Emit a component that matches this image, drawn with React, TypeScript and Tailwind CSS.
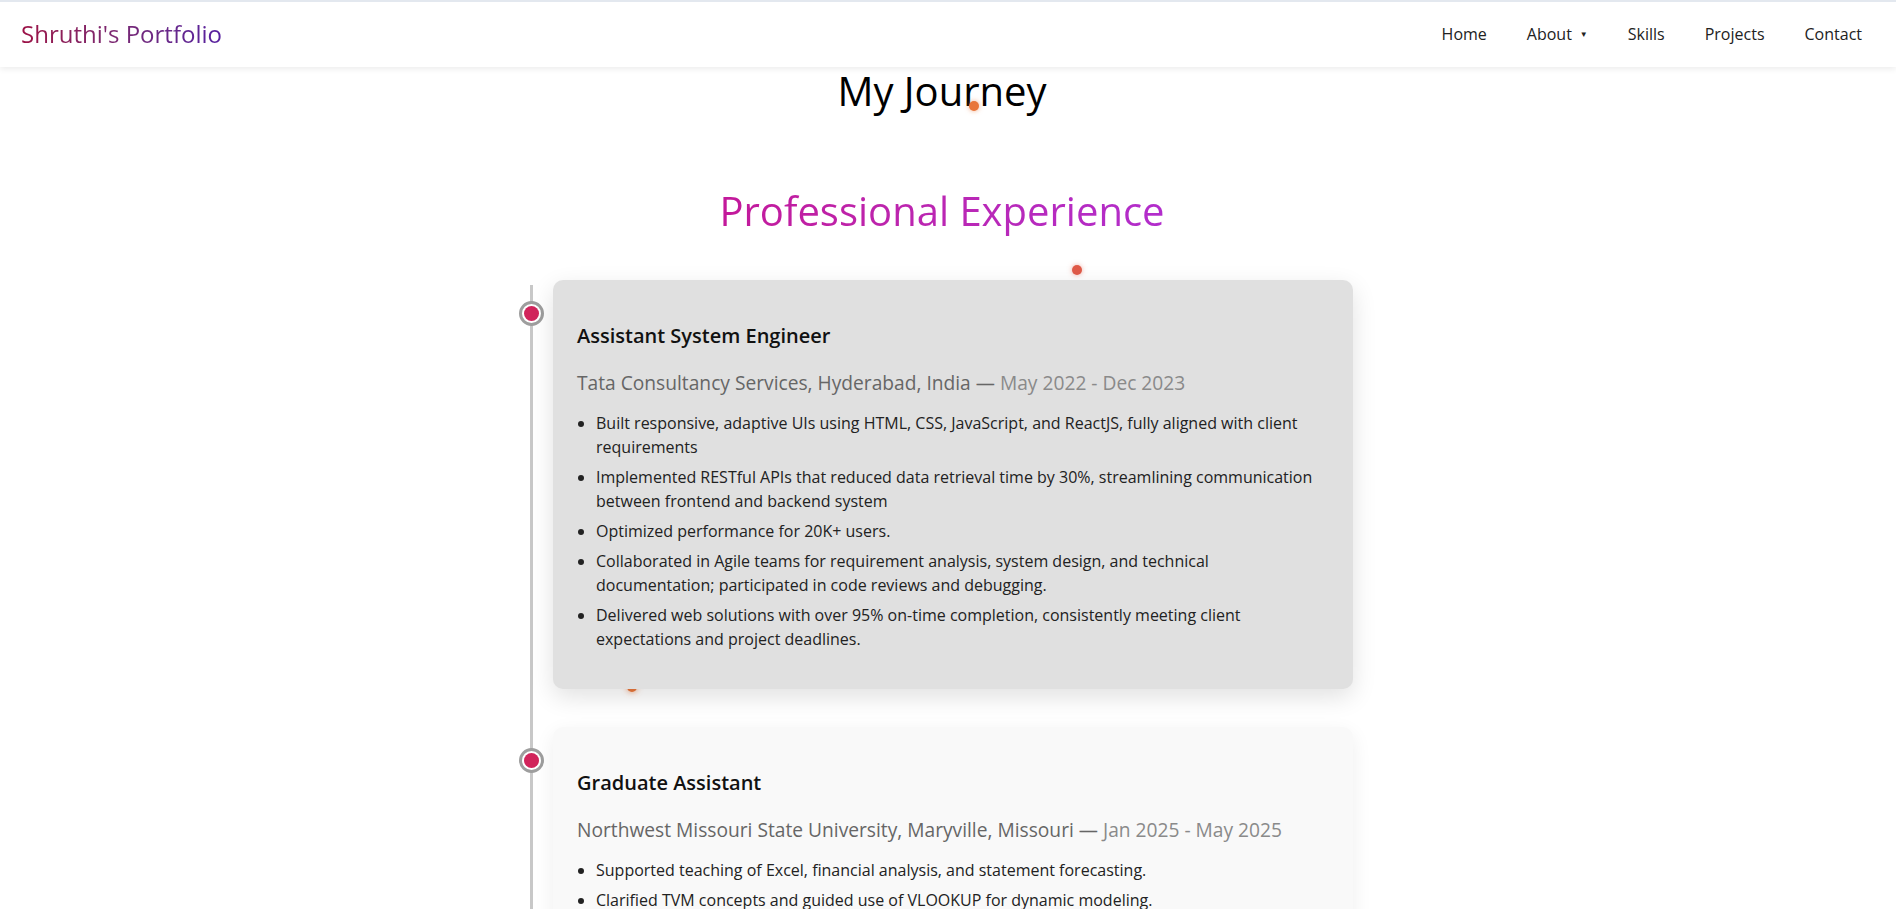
import React from "react";

type Job = {
  title: string;
  company: string;
  dates: string;
  points: string[];
  active?: boolean;
};

const jobs: Job[] = [
  {
    title: "Assistant System Engineer",
    company: "Tata Consultancy Services, Hyderabad, India",
    dates: "May 2022 - Dec 2023",
    active: true,
    points: [
      "Built responsive, adaptive UIs using HTML, CSS, JavaScript, and ReactJS, fully aligned with client requirements",
      "Implemented RESTful APIs that reduced data retrieval time by 30%, streamlining communication between frontend and backend system",
      "Optimized performance for 20K+ users.",
      "Collaborated in Agile teams for requirement analysis, system design, and technical documentation; participated in code reviews and debugging.",
      "Delivered web solutions with over 95% on-time completion, consistently meeting client expectations and project deadlines.",
    ],
  },
  {
    title: "Graduate Assistant",
    company: "Northwest Missouri State University, Maryville, Missouri",
    dates: "Jan 2025 - May 2025",
    points: [
      "Supported teaching of Excel, financial analysis, and statement forecasting.",
      "Clarified TVM concepts and guided use of VLOOKUP for dynamic modeling.",
    ],
  },
];

function Marker() {
  return (
    <div className="absolute left-0 top-[21px] w-[25px] h-[25px] rounded-full border-[3px] border-[#9e9e9e] bg-white flex items-center justify-center">
      <div className="w-[15px] h-[15px] rounded-full bg-[#d1245b]" />
    </div>
  );
}

function Card({ job }: { job: Job }) {
  return (
    <div className="flex">
      <div className="w-[34px] shrink-0 relative">
        <Marker />
      </div>
      <div
        className={
          job.active
            ? "relative z-10 w-[800px] rounded-[10px] bg-[#e0e0e0] pl-[24px] pr-[32px] pt-[41px] pb-[32px] shadow-[0_8px_24px_rgba(0,0,0,0.12)]"
            : "relative z-10 w-[800px] rounded-[10px] bg-[#f9f9f9] pl-[24px] pr-[32px] pt-[41px] pb-[32px] shadow-[0_6px_20px_rgba(0,0,0,0.07)]"
        }
      >
        <h3 className="text-[20px] leading-[30px] font-semibold text-[#111]">{job.title}</h3>
        <p className="mt-[17.6px] text-[19.2px] leading-[28.8px] text-[#666]">
          {job.company} — <span className="text-[#8a8a8a]">{job.dates}</span>
        </p>
        <ul className="mt-[13.6px] pl-[19px] list-disc text-[16px] leading-[24px] text-[#222]">
          {job.points.map((p) => (
            <li key={p} className="mb-[6px]">
              {p}
            </li>
          ))}
        </ul>
      </div>
    </div>
  );
}

export default function App() {
  return (
    <div className="min-h-screen bg-white font-['Open_Sans',sans-serif] relative overflow-hidden">
      <nav className="relative z-20 h-[67px] border-t-2 border-[#e3e8ef] bg-white shadow-[0_2px_6px_rgba(0,0,0,0.08)] flex items-center justify-between pl-[21px] pr-[34px] pb-[2px]">
        <div className="text-[24px] leading-[32px] font-medium bg-linear-to-r from-[#9c0f45] to-[#561fa0] bg-clip-text text-transparent">
          Shruthi's Portfolio
        </div>
        <ul className="flex items-center gap-[40px] text-[16px] text-[#222]">
          <li>Home</li>
          <li className="flex items-center">
            About<span className="ml-[8px] text-[8px]">▼</span>
          </li>
          <li>Skills</li>
          <li>Projects</li>
          <li>Contact</li>
        </ul>
      </nav>

      <main className="relative">
        <div className="absolute left-[969px] top-[34px] w-[10px] h-[10px] rounded-full bg-[#e8763a] shadow-[0_0_5px_rgba(232,118,58,0.6)] z-10" />
        <div className="absolute left-[1072px] top-[198px] w-[10px] h-[10px] rounded-full bg-[#e05a48] shadow-[0_0_5px_rgba(224,90,72,0.5)]" />
        <div className="absolute left-[627px] top-[615px] w-[10px] h-[10px] rounded-full bg-[#e8763a] shadow-[0_0_6px_rgba(232,118,58,0.7)]" />

        <div className="pr-[12px]">
          <h1 className="text-center text-[40px] leading-[48px] font-medium text-black">My Journey</h1>
          <h2 className="mt-[72px] text-center text-[40px] leading-[48px] font-medium">
            <span className="bg-linear-to-r from-[#c3189a] to-[#b22dcc] bg-clip-text text-transparent">
              Professional Experience
            </span>
          </h2>
        </div>

        <div className="relative mt-[45px] w-[858px] mx-auto pb-[40px]">
          <div className="absolute left-[11px] top-[5px] bottom-0 w-[3px] bg-[#c8c8c8]" />
          <div className="flex flex-col gap-[38px]">
            {jobs.map((j) => (
              <Card key={j.title} job={j} />
            ))}
          </div>
        </div>
      </main>
    </div>
  );
}
